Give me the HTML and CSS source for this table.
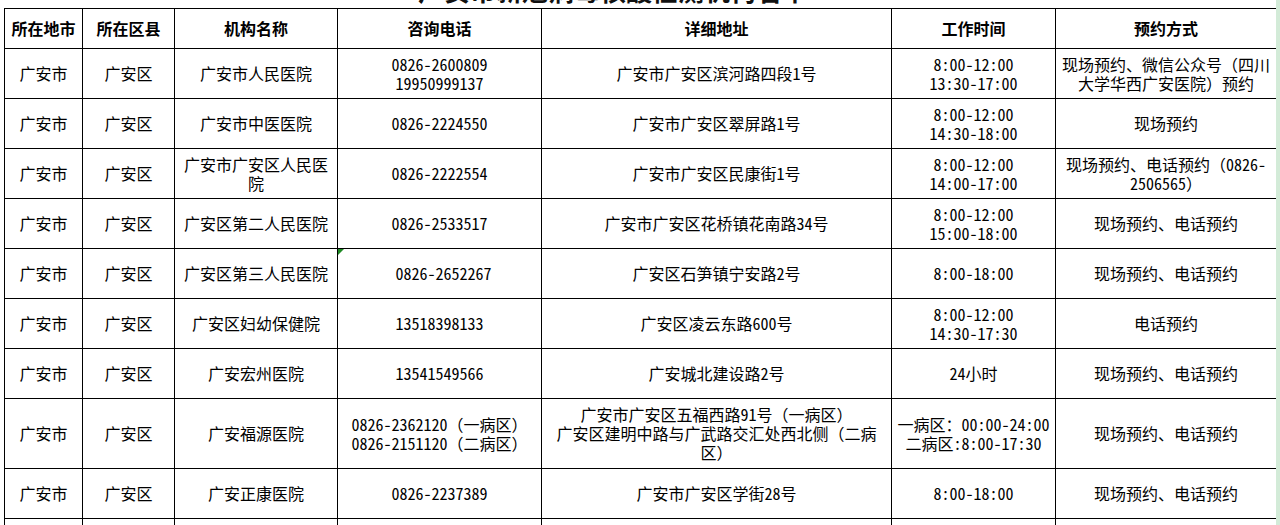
FILE: index.html
```html
<!DOCTYPE html>
<html lang="zh-CN">
<head>
<meta charset="utf-8">
<title>广安市机构名单</title>
<link rel="stylesheet" href="styles.css">
</head>
<body>
<div class="page">
  <div class="sheet">
    <div class="title">广安市新冠病毒核酸检测机构名单</div>
    <table class="grid">
      <colgroup>
        <col class="c1"><col class="c2"><col class="c3"><col class="c4"><col class="c5"><col class="c6"><col class="c7">
      </colgroup>
      <thead>
        <tr class="head">
          <th>所在地市</th><th>所在区县</th><th>机构名称</th><th>咨询电话</th><th>详细地址</th><th>工作时间</th><th>预约方式</th>
        </tr>
      </thead>
      <tbody>
        <tr class="row">
          <td>广安市</td><td>广安区</td><td>广安市人民医院</td><td>0826-2600809<br>19950999137</td><td>广安市广安区滨河路四段1号</td><td>8:00-12:00<br>13:30-17:00</td><td>现场预约、微信公众号（四川<br>大学华西广安医院）预约</td>
        </tr>
        <tr class="row">
          <td>广安市</td><td>广安区</td><td>广安市中医医院</td><td>0826-2224550</td><td>广安市广安区翠屏路1号</td><td>8:00-12:00<br>14:30-18:00</td><td>现场预约</td>
        </tr>
        <tr class="row">
          <td>广安市</td><td>广安区</td><td>广安市广安区人民医<br>院</td><td>0826-2222554</td><td>广安市广安区民康街1号</td><td>8:00-12:00<br>14:00-17:00</td><td>现场预约、电话预约（0826-<br>2506565）</td>
        </tr>
        <tr class="row">
          <td>广安市</td><td>广安区</td><td>广安区第二人民医院</td><td>0826-2533517</td><td>广安市广安区花桥镇花南路34号</td><td>8:00-12:00<br>15:00-18:00</td><td>现场预约、电话预约</td>
        </tr>
        <tr class="row">
          <td>广安市</td><td>广安区</td><td>广安区第三人民医院</td><td class="flag">&nbsp;0826-2652267</td><td>广安区石笋镇宁安路2号</td><td>8:00-18:00</td><td>现场预约、电话预约</td>
        </tr>
        <tr class="row">
          <td>广安市</td><td>广安区</td><td>广安区妇幼保健院</td><td>13518398133</td><td>广安区凌云东路600号</td><td>8:00-12:00<br>14:30-17:30</td><td>电话预约</td>
        </tr>
        <tr class="row">
          <td>广安市</td><td>广安区</td><td>广安宏州医院</td><td>13541549566</td><td>广安城北建设路2号</td><td>24小时</td><td>现场预约、电话预约</td>
        </tr>
        <tr class="row tall">
          <td>广安市</td><td>广安区</td><td>广安福源医院</td><td>0826-2362120（一病区）<br>0826-2151120（二病区）</td><td>广安市广安区五福西路91号（一病区）<br>广安区建明中路与广武路交汇处西北侧（二病<br>区）</td><td>一病区：00:00-24:00<br>二病区:8:00-17:30</td><td>现场预约、电话预约</td>
        </tr>
        <tr class="row">
          <td>广安市</td><td>广安区</td><td>广安正康医院</td><td>0826-2237389</td><td>广安市广安区学街28号</td><td>8:00-18:00</td><td>现场预约、电话预约</td>
        </tr>
        <tr class="row">
          <td>广安市</td><td>广安区</td><td>广安区中医医院</td><td>0826-2222222</td><td>广安市广安区</td><td>8:00-18:00</td><td>现场预约、电话预约</td>
        </tr>
      </tbody>
    </table>
  </div>
  <div class="gutter"></div>
</div>
</body>
</html>
```

FILE: styles.css
```css
html, body {
  margin: 0;
  padding: 0;
  background: #ffffff;
  overflow: hidden;
}

.page {
  display: flex;
  width: 1280px;
  height: 525px;
  overflow: hidden;
}

.sheet {
  width: 1276px;
  flex: none;
}

.gutter {
  flex: 1;
  background: #d3ebd8;
}

.title {
  margin-top: -22px;
  height: 30px;
  line-height: 24px;
  font-size: 26px;
  font-weight: 700;
  color: #111;
  text-align: center;
  padding-right: 50px;
  font-family: "Noto Sans CJK SC", sans-serif;
  white-space: nowrap;
  overflow: hidden;
}

.grid {
  margin-left: 4px;
  border-collapse: collapse;
  table-layout: fixed;
  width: 1272px;
  font-family: "Noto Sans Mono CJK SC", "Noto Sans CJK SC", monospace;
  font-size: 16px;
  line-height: 19px;
  color: #000;
}

.c1 { width: 78px; }
.c2 { width: 92px; }
.c3 { width: 163px; }
.c4 { width: 204px; }
.c5 { width: 350px; }
.c6 { width: 164px; }
.c7 { width: 221px; }

.grid th,
.grid td {
  border: 1px solid #000;
  padding: 0 2px;
  text-align: center;
  vertical-align: middle;
  white-space: nowrap;
  overflow: hidden;
}

.grid th {
  font-weight: 700;
}

.head { height: 40px; }
.row { height: 50px; }
.row.tall { height: 70px; }

.flag {
  position: relative;
}

.flag::before {
  content: "";
  position: absolute;
  left: 0;
  top: 0;
  width: 0;
  height: 0;
  border-top: 6px solid #1f8a24;
  border-right: 6px solid transparent;
}
```
